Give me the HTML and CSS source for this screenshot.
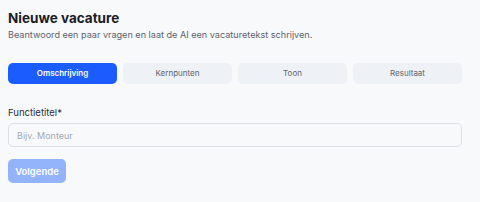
FILE: index.html
```html
<!DOCTYPE html>
<html lang="nl">
<head>
    <meta charset="UTF-8">
    <meta name="viewport" content="width=device-width, initial-scale=1.0">
    <title>Nieuwe vacature</title>
    <link rel="stylesheet" href="styles.css">
</head>
<body>
    <!-- Wizard -->
    <div class="wizard">
        <h1 class="wizard-title">Nieuwe vacature</h1>
        <p class="wizard-intro">Beantwoord een paar vragen en laat de AI een vacaturetekst schrijven.</p>
        <!-- Steps -->
        <div class="steps">
            <div class="step active">Omschrijving</div>
            <div class="step">Kernpunten</div>
            <div class="step">Toon</div>
            <div class="step">Resultaat</div>
        </div>
        <!-- Step form -->
        <form class="step-form">
            <label for="job-title">Functietitel*</label>
            <input type="text" id="job-title" placeholder="Bijv. Monteur">
            <button type="button" class="next-btn" disabled>Volgende</button>
        </form>
    </div>
</body>
</html>
```

FILE: styles.css
```css
/* Global Styling */
body {
    margin: 0;
    background-color: #f8f9fb;
    font-family: Inter, "Noto Sans", sans-serif;
    color: #1a1d26;
}
/* Wizard Container */
.wizard {
    width: 454px;
    padding: 8px;
}
.wizard-title {
    margin: 1px 0 0;
    font-size: 13.5px;
    font-weight: 700;
    line-height: 18px;
}
.wizard-intro {
    margin: 1px 0 0;
    font-size: 9.1px;
    line-height: 13px;
    color: #5c6270;
}
/* Steps */
.steps {
    display: grid;
    grid-template-columns: repeat(4, 1fr);
    gap: 6px;
    margin-top: 22px;
}
.step {
    height: 21px;
    line-height: 21px;
    border-radius: 5px;
    background-color: #eef1f5;
    color: #60656f;
    font-size: 8px;
    text-align: center;
}
.step.active {
    background-color: #1b5cff;
    color: #ffffff;
    font-weight: 600;
}
/* Step Form */
.step-form {
    display: flex;
    flex-direction: column;
    align-items: flex-start;
    margin-top: 23px;
}
.step-form label {
    font-size: 9.5px;
    line-height: 12px;
    color: #2a2e37;
}
.step-form input[type="text"] {
    box-sizing: border-box;
    width: 100%;
    height: 24px;
    margin-top: 4px;
    padding: 0 8px;
    border: 1px solid #dcdfe5;
    border-radius: 5px;
    background-color: #f8f9fb;
    font-family: inherit;
    font-size: 9px;
    outline: none;
}
.step-form input::placeholder {
    color: #a3a7b0;
}
.next-btn {
    width: 58px;
    height: 24px;
    margin-top: 12px;
    padding: 0;
    border: none;
    border-radius: 5px;
    background-color: #93b3fb;
    color: #ffffff;
    font-family: inherit;
    font-size: 9.5px;
    font-weight: 600;
}
```
